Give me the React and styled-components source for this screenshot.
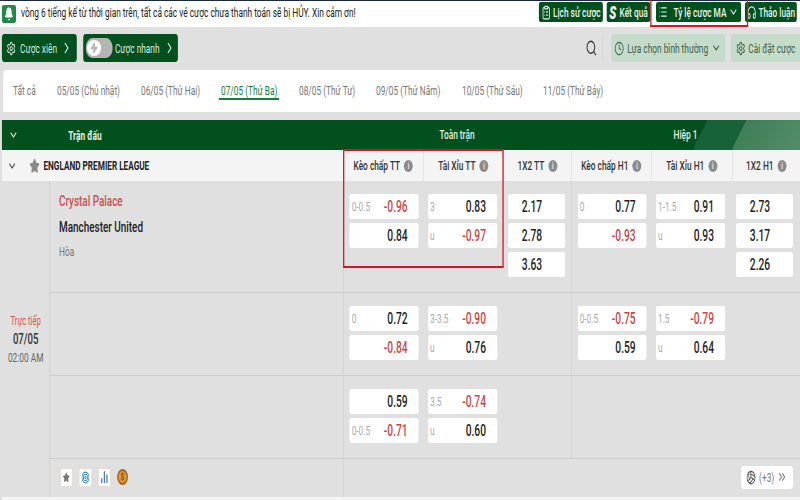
import React from "react";
import styled, { createGlobalStyle } from "styled-components";
import { Bell, ChevronRight, ChevronDown, Search, Clock, Settings, List, ClipboardList, Star, Zap, Headphones, ChevronsRight, Target, ChartNoAxesColumn, Volleyball } from "lucide-react";

const S = 0.64;
const w = (px) => `${(px / S).toFixed(2)}px`;
const GREEN = "#03501f";
const COLS = `${w(341)} ${w(80)} ${w(80)} ${w(68)} ${w(80)} ${w(81)} ${w(68)}`;

const Global = createGlobalStyle`
  * { box-sizing: border-box; }
  html, body { margin: 0; padding: 0; overflow: hidden; background: #e0e0e0; }
  body { font-family: Roboto, "Liberation Sans", sans-serif; }
`;
const Page = styled.div`
  position: relative; width: ${w(800)}; height: 500px; overflow: hidden;
  transform: scaleX(${S}); transform-origin: left top; background: #e0e0e0; color: #222;
`;
const TopBar = styled.header`
  height: 27px; background: #fff; border-top: 1px solid #1c2740;
  display: flex; align-items: flex-start; padding: 1px ${w(3)} 0 ${w(2)}; gap: ${w(4)};
`;
const BellBox = styled.div`
  width: ${w(14)}; height: 18px; margin-top: 3px; background: #1e8a45; border-radius: 3px; color: #fff;
  display: flex; align-items: center; justify-content: center; flex: none;
`;
const Notice = styled.div`
  flex: 1; font-size: 13px; line-height: 22px; padding-left: ${w(1)}; white-space: nowrap; color: #222;
`;
const TopButton = styled.button`
  height: 20px; width: ${(p) => w(p.$w)}; margin-left: ${(p) => w(p.$ml || 0)}; flex: none; border: 0; padding: 0; border-radius: 3px;
  background: ${GREEN}; color: #e8f3ea; font: 500 13px Roboto, sans-serif; white-space: nowrap;
  display: flex; align-items: center; justify-content: center; gap: ${w(2)};
`;
const SIcon = styled.span` font: italic 900 18px Roboto, sans-serif; color: #fff; margin-right: 2px; `;
const Toolbar = styled.div`
  height: 43px; display: flex; align-items: center; padding: 0 0 1px ${w(2)}; gap: ${w(6)};
`;
const GreenAction = styled.button`
  height: 28px; width: ${(p) => w(p.$w)}; flex: none; border: 0; border-radius: 4px; background: ${GREEN}; color: #d8ecdc; white-space: nowrap;
  font: 400 13px Roboto, sans-serif; display: flex; align-items: center; justify-content: center; gap: ${w(4)}; padding: 0;
`;
const Toggle = styled.span`
  width: ${w(27)}; height: 20px; border-radius: 10px; background: #b5b5b5; display: flex; align-items: center; margin-right: -${w(2)};
`;
const Knob = styled.span`
  width: ${w(14)}; height: 16px; margin-left: ${w(1)}; border-radius: 50%; background: #fff; color: #aaa;
  display: flex; align-items: center; justify-content: center;
`;
const Spacer = styled.div` flex: 1; `;
const SearchWrap = styled.div`
  height: 28px; display: flex; align-items: center; color: #333; padding-right: ${w(5)}; border-right: 1px solid #d4d4d4; margin-right: ${w(2)};
`;
const SoftButton = styled.button`
  height: 28px; width: ${(p) => w(p.$w)}; flex: none; border: 0; padding: 0; background: #c6dccb; color: #3e5f49; white-space: nowrap;
  border-radius: ${(p) => (p.$flushRight ? "4px 0 0 4px" : "4px")};
  font: 400 13px Roboto, sans-serif; display: flex; align-items: center; justify-content: center; gap: ${w(3)};
`;
const Tabs = styled.nav`
  height: 42px; margin-left: ${w(3)}; background: #fff; border-radius: 5px 0 0 0; position: relative;
  display: flex; align-items: center; font-size: 13px; color: #777; padding: 0 0 1px ${w(10)};
`;
const Tab = styled.span`
  width: ${(p) => w(p.$w)}; flex: none; white-space: nowrap;
  position: relative; color: ${(p) => (p.$active ? "#15813f" : "#777")};
  &::after {
    content: ""; display: ${(p) => (p.$active ? "block" : "none")}; position: absolute;
    left: -${w(2)}; top: 15px; width: ${w(60)}; height: 2px; background: #15813f;
  }
`;
const Head = styled.div`
  margin: 8px 0 0 ${w(2)}; height: 30px; display: grid; grid-template-columns: ${w(341)} ${w(228)} 1fr;
  background: ${GREEN}; color: #dff0e2; font-size: 13px; font-weight: 500; align-items: center; text-align: center;
`;
const HeadMatch = styled.div`
  display: flex; align-items: center; color: #e4f3e6; padding-left: ${w(6)}; height: 100%;
`;
const HeadMatchLabel = styled.span` margin-left: ${w(50)}; font-weight: 700; `;
const HeadHalf = styled.div`
  height: 100%; line-height: 30px;
  background: linear-gradient(127deg, ${GREEN} 56%, #176238 56%, #176238 72%, #3f7f57 72%, #538d6a 100%);
`;
const HeadFull = styled.div` height: 100%; line-height: 30px; `;
const League = styled.div`
  margin-left: ${w(2)}; height: 31px; display: grid; grid-template-columns: ${COLS}; background: #f4f4f4;
`;
const LeagueName = styled.div`
  display: flex; align-items: center; padding-left: ${w(5)}; font-size: 12.8px; font-weight: 700; color: #222; gap: ${w(4)};
`;
const StarIcon = styled(Star)` margin-left: ${w(8)}; color: #8a8a8a; fill: #8a8a8a; `;
const MarketHead = styled.div`
  display: flex; align-items: center; justify-content: center; gap: ${w(4)}; font-size: 13px; color: #333;
  font-weight: 500; border-left: 1px solid #dcdcdc;
`;
const Info = styled.span`
  width: ${w(9)}; height: 12px; border-radius: 50%; background: #8b8b8b; color: #eee; font-size: 9px; font-weight: 700;
  display: inline-flex; align-items: center; justify-content: center;
`;
const Body = styled.div`
  margin-left: ${w(2)}; display: grid; grid-template-columns: ${w(48)} 1fr; height: 316px;
`;
const DateCol = styled.div`
  border-right: 1px solid #cacaca; display: flex; flex-direction: column; align-items: center; padding-top: 132px;
`;
const Live = styled.div` color: #d9534f; font-size: 12px; line-height: 17px; `;
const DateText = styled.div` color: #333; font-size: 15px; font-weight: 500; line-height: 19px; `;
const Time = styled.div` color: #666; font-size: 13px; line-height: 17px; `;
const Rows = styled.div` display: flex; flex-direction: column; `;
const Row = styled.div`
  height: ${(p) => p.$h}px; display: grid; grid-template-columns: ${w(293)} ${w(80)} ${w(80)} ${w(68)} ${w(80)} ${w(81)} ${w(68)};
  border-bottom: 1px solid #cdcdcd;
`;
const MatchInfo = styled.div` padding: 10px 0 0 ${w(9)}; `;
const Home = styled.div` color: #c9504e; font-size: 15.5px; font-weight: 500; line-height: 20px; `;
const Away = styled.div` color: #222; font-size: 15.5px; font-weight: 500; line-height: 20px; margin-top: 6px; `;
const Draw = styled.div` color: #777; font-size: 13px; line-height: 18px; margin-top: 6px; `;
const Market = styled.div`
  padding: 13px 0 0 ${(p) => w(p.$pad)};
  display: flex; flex-direction: column; gap: 4px;
  border-left: ${(p) => (p.$edge ? "1px solid #cdcdcd" : "0")};
`;
const Odd = styled.div`
  width: ${(p) => w(p.$w || 69)}; height: 25px; background: #fff; border-radius: 3px;
  display: flex; align-items: center; padding: 0 ${w(11)} 0 ${w(2)};
`;
const Line = styled.span` color: #aaa; font-size: 13px; `;
const Price = styled.span`
  margin-left: auto; margin-right: ${(p) => (p.$center ? "auto" : 0)}; font-size: 16px; font-weight: 500; color: ${(p) => (p.$neg ? "#cc4545" : "#222")};
`;
const Footer = styled.div`
  position: relative; height: 38px; display: flex; align-items: center; padding: 0 ${w(7)} 2px ${w(10)}; gap: ${w(6)};
  &::after { content: ""; position: absolute; left: ${w(293)}; top: 0; bottom: 0; border-left: 1px solid #cdcdcd; }
`;
const Mini = styled.span`
  width: ${w(13)}; height: 19px; background: #fff; border: 1px solid #e2d4cf; border-radius: 2px; color: ${(p) => p.$c};
  display: flex; align-items: center; justify-content: center;
`;
const Coin = styled.span`
  width: ${w(11)}; height: 16px; border-radius: 50%; background: #e2963a; border: 2px solid #a5651f;
  color: #7a4510; font-size: 9px; font-weight: 700; display: flex; align-items: center; justify-content: center;
`;
const More = styled.div`
  margin-left: auto; width: ${w(52)}; height: 23px; border-radius: 4px; background: #fff; color: #777; font-size: 13px;
  display: flex; align-items: center; justify-content: center; gap: ${w(3)};
`;
const NextStrip = styled.div`
  margin-left: ${w(2)}; height: 3px; background: #f4f4f4;
`;
const Mark = styled.div`
  position: absolute; left: ${(p) => w(p.$x)}; top: ${(p) => p.$y}px; width: ${(p) => w(p.$bw)}; height: ${(p) => p.$bh}px;
  border: 2px solid #d31526; border-top-width: ${(p) => (p.$open ? 0 : "2px")}; pointer-events: none;
`;

const ODD_ROWS = [
  {
    h: 112,
    m: [
      [["0-0.5", "-0.96"], ["", "0.84"]],
      [["3", "0.83"], ["u", "-0.97"]],
      ["2.17", "2.78", "3.63"],
      [["0", "0.77"], ["", "-0.93"]],
      [["1-1.5", "0.91"], ["u", "0.93"]],
      ["2.73", "3.17", "2.26"],
    ],
  },
  {
    h: 83,
    m: [
      [["0", "0.72"], ["", "-0.84"]],
      [["3-3.5", "-0.90"], ["u", "0.76"]],
      [],
      [["0-0.5", "-0.75"], ["", "0.59"]],
      [["1.5", "-0.79"], ["u", "0.64"]],
      [],
    ],
  },
  {
    h: 83,
    m: [
      [["", "0.59"], ["0-0.5", "-0.71"]],
      [["3.5", "-0.74"], ["u", "0.60"]],
      [],
      [],
      [],
      [],
    ],
  },
];
const PADS = [6, 5, 5, 6, 5, 4];
const TABS = [["Tất cả", 44], ["05/05 (Chủ nhật)", 84], ["06/05 (Thứ Hai)", 80], ["07/05 (Thứ Ba)", 78, true], ["08/05 (Thứ Tư)", 77], ["09/05 (Thứ Năm)", 86], ["10/05 (Thứ Sáu)", 81], ["11/05 (Thứ Bảy)", 90]];
const HEADS = ["Kèo chấp TT", "Tài Xỉu TT", "1X2 TT", "Kèo chấp H1", "Tài Xỉu H1", "1X2 H1"];

export default function App() {
  return (
    <Page>
      <Global />
      <TopBar>
        <BellBox><Bell size={14} fill="#fff" /></BellBox>
        <Notice>vòng 6 tiếng kể từ thời gian trên, tất cả các vé cược chưa thanh toán sẽ bị HỦY. Xin cảm ơn!</Notice>
        <TopButton $w={64}><ClipboardList size={15} />Lịch sử cược</TopButton>
        <TopButton $w={43}><SIcon>S</SIcon>Kết quả</TopButton>
        <TopButton $w={85} $ml={2}><List size={14} />&nbsp;&nbsp;Tỷ lệ cược MA<ChevronDown size={16} /></TopButton>
        <TopButton $w={52}><Headphones size={15} />Thảo luận</TopButton>
      </TopBar>
      <Toolbar>
        <GreenAction $w={75}><Settings size={15} />Cược xiên<ChevronRight size={18} /></GreenAction>
        <GreenAction $w={95}><Toggle><Knob><Zap size={12} fill="#bbb" /></Knob></Toggle>Cược nhanh<ChevronRight size={18} /></GreenAction>
        <Spacer />
        <SearchWrap><Search size={18} /></SearchWrap>
        <SoftButton $w={114}><Clock size={15} />Lựa chọn bình thường<ChevronDown size={16} /></SoftButton>
        <SoftButton $w={69} $flushRight><Settings size={15} />Cài đặt cược</SoftButton>
      </Toolbar>
      <Tabs>
        {TABS.map(([t, tw, active]) => <Tab key={t} $w={tw} $active={active}>{t}</Tab>)}
      </Tabs>
      <Head>
        <HeadMatch><ChevronDown size={16} /><HeadMatchLabel>Trận đấu</HeadMatchLabel></HeadMatch>
        <HeadFull>Toàn trận</HeadFull>
        <HeadHalf>Hiệp 1</HeadHalf>
      </Head>
      <League>
        <LeagueName><ChevronDown size={16} color="#444" /><StarIcon size={16} />ENGLAND PREMIER LEAGUE</LeagueName>
        {HEADS.map((h) => (
          <MarketHead key={h}>{h}<Info>i</Info></MarketHead>
        ))}
      </League>
      <Body>
        <DateCol>
          <Live>Trực tiếp</Live>
          <DateText>07/05</DateText>
          <Time>02:00 AM</Time>
        </DateCol>
        <Rows>
          {ODD_ROWS.map((r, i) => (
            <Row key={i} $h={r.h}>
              <MatchInfo>
                {i === 0 && (
                  <>
                    <Home>Crystal Palace</Home>
                    <Away>Manchester United</Away>
                    <Draw>Hòa</Draw>
                  </>
                )}
              </MatchInfo>
              {r.m.map((cells, k) => (
                <Market key={k} $pad={PADS[k]} $edge={k === 0 || k === 3}>
                  {cells.map((c, j) =>
                    typeof c === "string" ? (
                      <Odd key={j} $w={57}><Price $center>{c}</Price></Odd>
                    ) : (
                      <Odd key={j}>
                        <Line>{c[0]}</Line>
                        <Price $neg={c[1].startsWith("-")}>{c[1]}</Price>
                      </Odd>
                    )
                  )}
                </Market>
              ))}
            </Row>
          ))}
          <Footer>
            <Mini $c="#777"><Star size={11} fill="#777" /></Mini>
            <Mini $c="#2f80b8"><Target size={13} /></Mini>
            <Mini $c="#2b6ea8"><ChartNoAxesColumn size={14} strokeWidth={3} /></Mini>
            <Coin>$</Coin>
            <More><Volleyball size={15} color="#555" />(+3)<ChevronsRight size={16} /></More>
          </Footer>
        </Rows>
      </Body>
      <NextStrip />
      <Mark $x={343} $y={149} $bw={161} $bh={119} />
      <Mark $x={650} $y={0} $bw={98} $bh={27} $open />
    </Page>
  );
}
